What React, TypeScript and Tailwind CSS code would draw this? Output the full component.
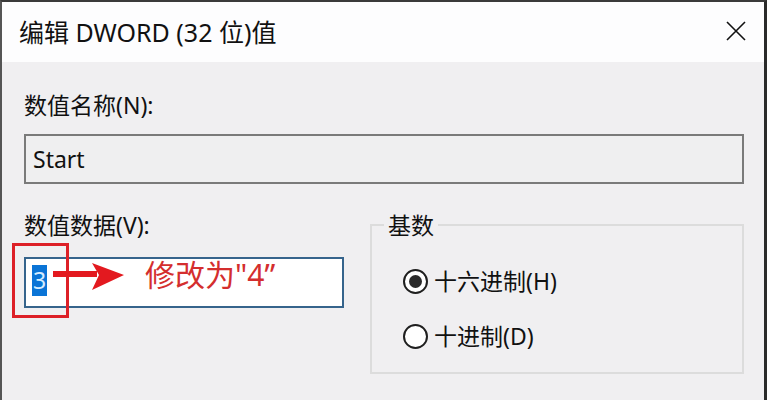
import React from "react";

const font = { fontFamily: '"Noto Sans", "Noto Sans CJK SC", sans-serif' };

function Radio({ checked, label }: { checked?: boolean; label: string }) {
  return (
    <div className="flex h-[30px] items-center">
      <span className="flex h-[25px] w-[25px] items-center justify-center rounded-full border-2 border-[#1f1f1f] bg-white">
        {checked && <span className="h-[13px] w-[13px] rounded-full bg-[#2a2a2a]" />}
      </span>
      <span className="ml-[6px] text-[23px] leading-[30px] text-[#111]">{label}</span>
    </div>
  );
}

export default function App() {
  return (
    <div
      className="h-[400px] w-[767px] overflow-hidden border-t-2 border-r-[3px] border-l-2 border-t-[#3a3a3a] border-r-[#2a2a2a] border-l-[#555] bg-[#f0eff1]"
      style={font}
    >
      {/* title bar */}
      <div className="flex h-[60px] items-center justify-between bg-[#fdfdfe] pl-[17px] pr-[18px]">
        <span className="text-[25px] leading-[30px] text-[#111]">编辑 DWORD (32 位)值</span>
        <svg width="20" height="20" viewBox="0 0 20 20" className="-mt-[2px]">
          <path d="M1 1L19 19M19 1L1 19" stroke="#111" strokeWidth="1.6" />
        </svg>
      </div>

      <div className="pl-[22px] pr-[20px] pt-[28px]">
        <div className="text-[23px] leading-[30px] text-[#111]">数值名称(N):</div>
        <div className="mt-[14px] flex h-[50px] items-center border-2 border-[#7a7a7a] bg-[#efeff0] px-[7px] text-[23px] text-[#111]">
          Start
        </div>

        <div className="mt-[26px] flex">
          <div className="w-[320px]">
            <div className="text-[23px] leading-[30px] text-[#111]">数值数据(V):</div>
            <div className="relative mt-[17px] h-[51px] border-2 border-[#36648c] bg-white">
              <span className="absolute left-[6px] top-[6px] flex h-[31px] w-[15px] items-center justify-center bg-[#0a74d6] text-[23px] leading-none text-[#d6ecff]">
                3
              </span>
              {/* annotation */}
              <div className="absolute -left-[14px] -top-[16px] h-[75px] w-[57px] border-[3px] border-[#dd2027]" />
              <svg className="absolute left-[27px] top-[2px]" width="72" height="30" viewBox="0 0 72 30">
                <path d="M0 13H44" stroke="#e3191f" strokeWidth="6" />
                <path d="M39 2L71 14L39 29L46 14Z" fill="#e3191f" />
              </svg>
              <span className="absolute left-[119px] top-[-4px] text-[30px] leading-[40px] text-[#d42e2e]">修改为"4”</span>
            </div>
          </div>

          <fieldset className="ml-[26px] w-[374px] border-2 border-[#dcdcdc] pb-[21px] pl-[31px]">
            <legend className="ml-[-19px] px-[4px] text-[23px] leading-[30px] text-[#111]">基数</legend>
            <div className="mt-[26px] flex flex-col gap-[25px]">
              <Radio checked label="十六进制(H)" />
              <Radio label="十进制(D)" />
            </div>
          </fieldset>
        </div>
      </div>
    </div>
  );
}
